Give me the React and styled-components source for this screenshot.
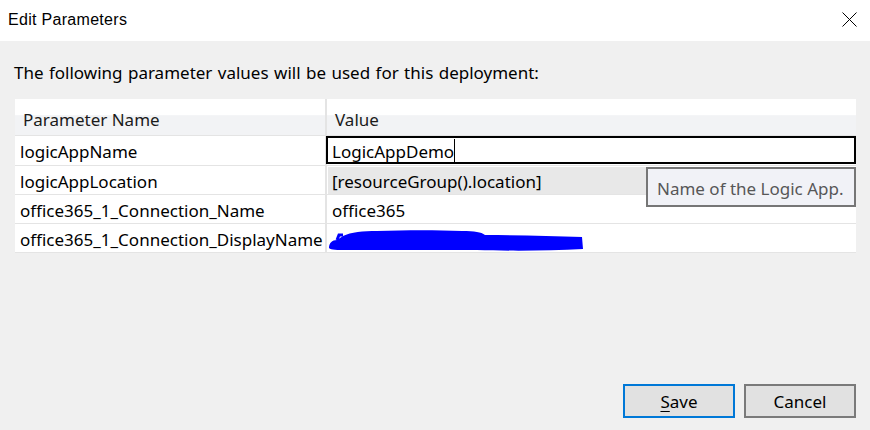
import React from 'react'
import styled, { createGlobalStyle } from 'styled-components'

const GlobalStyle = createGlobalStyle`
    html, body {
        margin: 0;
        padding: 0;
        background: #f0f0f0;
    }
    * {
        box-sizing: border-box;
    }
`

const Dialog = styled.div`
    width: 870px;
    height: 430px;
    display: flex;
    flex-direction: column;
    background: #f0f0f0;
    font-family: "Noto Sans", "Open Sans", sans-serif;
    color: #000;
    overflow: hidden;
`

const TitleBar = styled.div`
    height: 41px;
    background: #fff;
    display: flex;
    align-items: center;
    justify-content: space-between;
    padding: 0 13px 2px 8px;
`

const Title = styled.span`
    font-family: "Liberation Sans", Arial, sans-serif;
    font-size: 16px;
    letter-spacing: 0.3px;
`

const CloseButton = styled.div`
    width: 16px;
    height: 16px;
    display: flex;
    align-items: center;
    justify-content: center;
`

const Body = styled.div`
    flex: 1;
    display: flex;
    flex-direction: column;
    padding: 20px 14px 12px 15px;
`

const Intro = styled.p`
    margin: 0 0 14px -1px;
    font-size: 17px;
    word-spacing: 1px;
    line-height: 24px;
`

const Table = styled.div`
    position: relative;
    display: grid;
    grid-template-columns: 310px 1fr;
    column-gap: 2px;
    row-gap: 1px;
    background: #e4e4e4;
    padding-bottom: 1px;
`

const HeaderCell = styled.div`
    height: 36px;
    display: flex;
    align-items: center;
    padding: 4px 0 0 8px;
    background: linear-gradient(#ffffff 0%, #ffffff 45%, #f2f3f5 46%, #f2f3f5 100%);
    font-size: 17px;
    color: #1b1b1b;
`

const Cell = styled.div`
    position: relative;
    height: ${p => (p.$first ? '29px' : '28px')};
    display: flex;
    align-items: center;
    padding: 2px 0 0 5px;
    background: #fff;
    font-size: 17px;
    white-space: nowrap;
`

const ReadOnly = styled.div`
    position: absolute;
    inset: 1px 0 0 1px;
    padding: 2px 0 0 4px;
    display: flex;
    align-items: center;
    background: #e8e8e8;
`

const EditBox = styled.div`
    position: absolute;
    inset: 0 0 1px -1px;
    border: 2px solid #000;
    display: flex;
    align-items: center;
    padding: 2px 0 0 4px;
    background: #fff;
`

const Caret = styled.span`
    display: inline-block;
    width: 1px;
    height: 23px;
    margin-top: -2px;
    background: #000;
`

const Tooltip = styled.div`
    position: absolute;
    left: 631px;
    top: 68px;
    width: 210px;
    height: 40px;
    border: 2px solid #767676;
    background: #f1f2f7;
    color: #575757;
    font-size: 17px;
    display: flex;
    align-items: center;
    padding: 2px 0 0 9px;
    white-space: nowrap;
`

const Footer = styled.div`
    margin-top: auto;
    display: flex;
    justify-content: flex-end;
    gap: 9px;
`

const Button = styled.button`
    width: 112px;
    height: 34px;
    background: #e1e1e1;
    border: 2px solid ${p => (p.$primary ? '#0078d7' : '#7a7a7a')};
    font-family: "Noto Sans", "Open Sans", sans-serif;
    font-size: 17px;
    color: #000;
    padding: 0;
    u {
        text-underline-offset: 3px;
    }
`

const rows = [
    { name: 'logicAppName', value: 'LogicAppDemo', edit: true },
    { name: 'logicAppLocation', value: '[resourceGroup().location]', readOnly: true },
    { name: 'office365_1_Connection_Name', value: 'office365' },
    { name: 'office365_1_Connection_DisplayName', value: '', redacted: true },
]

// blue redaction scribble over the display name
const Scribble = () => (
    <svg width="260" height="26" viewBox="0 0 260 26" style={{ position: 'absolute', left: 0, top: 2 }}>
        <path
            d="M2 22 C2 17 5 14 10 14 L16 10 C24 6 36 5 50 5 C80 4 110 4 135 5 C148 5 154 6 158 9 C190 9 225 10 255 11 L256 23 C220 25 180 25 150 24 C110 24 60 24 20 24 C10 24 4 24 2 22 Z"
            fill="#0000ff"
        />
        <path d="M10 14 L12 9 L16 9" stroke="#0000ff" strokeWidth="3" fill="none" />
    </svg>
)

const App = () => {
    return (
        <Dialog>
            <GlobalStyle />
            <TitleBar>
                <Title>Edit Parameters</Title>
                <CloseButton>
                    <svg width="15" height="15" viewBox="0 0 15 15">
                        <path d="M0.5 0.5 L14.5 14.5 M14.5 0.5 L0.5 14.5" stroke="#000" strokeWidth="1" />
                    </svg>
                </CloseButton>
            </TitleBar>
            <Body>
                <Intro>The following parameter values will be used for this deployment:</Intro>
                <Table>
                    <HeaderCell>Parameter Name</HeaderCell>
                    <HeaderCell>Value</HeaderCell>
                    {rows.map((r, i) => (
                        <React.Fragment key={r.name}>
                            <Cell $first={i === 0}>{r.name}</Cell>
                            <Cell $first={i === 0}>
                                {r.edit && (
                                    <EditBox>
                                        {r.value}
                                        <Caret />
                                    </EditBox>
                                )}
                                {r.readOnly && <ReadOnly>{r.value}</ReadOnly>}
                                {!r.edit && !r.readOnly && r.value}
                                {r.redacted && <Scribble />}
                            </Cell>
                        </React.Fragment>
                    ))}
                    <Tooltip>Name of the Logic App.</Tooltip>
                </Table>
                <Footer>
                    <Button $primary>
                        <u>S</u>ave
                    </Button>
                    <Button>Cancel</Button>
                </Footer>
            </Body>
        </Dialog>
    )
}

export default App
